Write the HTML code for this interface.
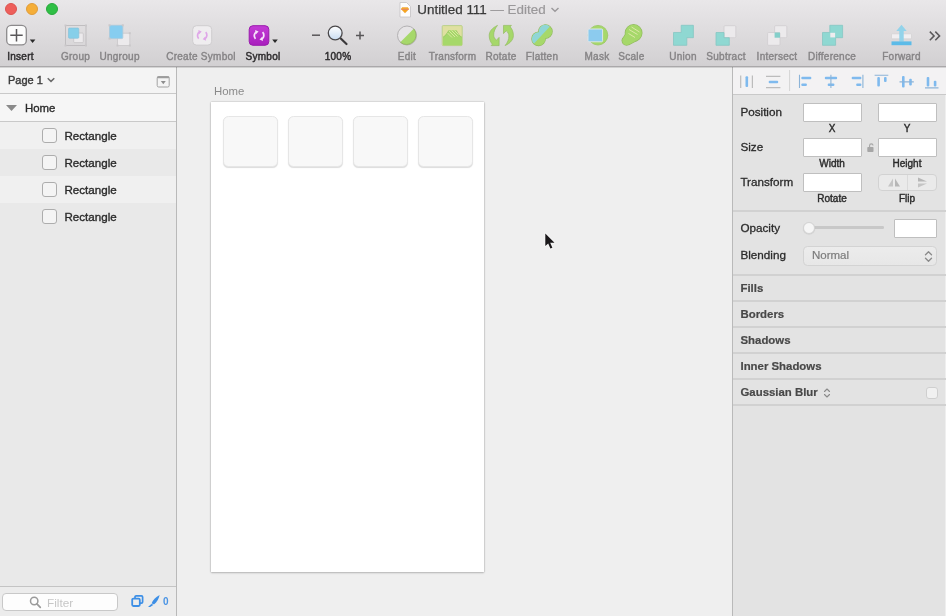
<!DOCTYPE html>
<html><head><meta charset="utf-8">
<style>
*{box-sizing:border-box;margin:0;padding:0}
html,body{width:946px;height:616px;overflow:hidden;background:#efefef;font-family:"Liberation Sans",sans-serif;}
.abs{position:absolute}
#win{will-change:transform;position:absolute;left:0;top:0;width:946px;height:616px;overflow:hidden;filter:blur(0.4px)}
#tb{position:absolute;left:0;top:0;width:946px;height:67px;background:linear-gradient(#e9e7e9,#d2d0d2);border-bottom:1px solid #aaa8aa;box-shadow:0 1px 0 rgba(0,0,0,.13);z-index:5}
.tl{position:absolute;top:3.4px;width:12px;height:12px;border-radius:50%}
.lbl{position:absolute;top:50.5px;font-size:10px;letter-spacing:0.27px;color:#868486;-webkit-text-stroke:0.4px #868486;white-space:nowrap;transform:translateX(-50%)}
.lbl.d{color:#2e2c2e;-webkit-text-stroke:0.45px #2e2c2e}
#title{position:absolute;top:2px;left:417.3px;font-size:13.4px;color:#3a3a3a;white-space:nowrap;-webkit-text-stroke:0.25px #3a3a3a}
#title span{color:#9a989a;-webkit-text-stroke:0.2px #9a989a}
/* left */
#left{position:absolute;left:0;top:67px;width:177px;height:549px;background:#e9e9e9;border-right:1px solid #b9b9b9}
#pagehdr{position:absolute;left:0;top:0;width:176px;height:27px;background:#f4f4f4;border-bottom:1px solid #c9c9c9}
#homerow{position:absolute;left:0;top:27px;width:176px;height:28px;background:#f6f6f6;border-bottom:1px solid #c9c9c9}
.row{position:absolute;left:0;width:176px;height:27px}
.row .cb{position:absolute;left:42px;top:6px;width:15px;height:14.5px;border:1.4px solid #adadad;border-radius:3px;background:#f4f4f4}
.row .t{position:absolute;left:64.5px;top:6.6px;font-size:11.6px;color:#2b2b2b;-webkit-text-stroke:0.35px #2b2b2b}
#lfoot{position:absolute;left:0;top:519px;width:176px;height:30px;background:#ececec;border-top:1px solid #c4c4c4}
/* canvas */
#canvas{position:absolute;left:177px;top:67px;width:556px;height:549px;background:#efefef}
#art{position:absolute;left:33.5px;top:34.5px;width:273.5px;height:470px;background:#fff;box-shadow:0 0 1.5px rgba(0,0,0,.3),0 1px 2px rgba(0,0,0,.18)}
.card{position:absolute;top:14.2px;width:54.4px;height:51px;border-radius:5.5px;background:#f8f8f8;border:1px solid #e6e6e6;box-shadow:0 1px 1px rgba(0,0,0,.14)}
/* right */
#right{position:absolute;left:732px;top:67px;width:213px;height:549px;background:#e3e3e3;border-left:1px solid #b9b9b9}
.sep{position:absolute;left:0;width:213px;height:1.6px;background:#d1d1d1}
.rl{position:absolute;left:7.4px;font-size:11.7px;color:#2b2b2b;-webkit-text-stroke:0.3px #2b2b2b}
.rb{position:absolute;left:7.5px;font-size:11.4px;font-weight:bold;color:#484848;-webkit-text-stroke:0.2px #484848}
.inp{position:absolute;height:19px;background:#fff;border:1px solid #bfbfbf;border-radius:1px}
.sl{position:absolute;font-size:10px;color:#2b2b2b;transform:translateX(-50%);white-space:nowrap;-webkit-text-stroke:0.4px #2b2b2b}
</style></head><body>
<div id="win">
<div id="tb">
  <div class="tl" style="left:5.4px;background:#ee5f5b;border:0.5px solid #dc5450"></div>
  <div class="tl" style="left:25.7px;background:#f5ae38;border:0.5px solid #e09c3a"></div>
  <div class="tl" style="left:45.8px;background:#2fbf45;border:0.5px solid #2aa83c"></div>
  <div id="title">Untitled 111 <span>— Edited</span></div>
  <div class="lbl d" style="left:20.5px">Insert</div>
  <div class="lbl" style="left:75.5px">Group</div>
  <div class="lbl" style="left:119.6px">Ungroup</div>
  <div class="lbl" style="left:201px">Create Symbol</div>
  <div class="lbl d" style="left:263px">Symbol</div>
  <div class="lbl d" style="left:338px">100%</div>
  <div class="lbl" style="left:407px">Edit</div>
  <div class="lbl" style="left:452.5px">Transform</div>
  <div class="lbl" style="left:501px">Rotate</div>
  <div class="lbl" style="left:542px">Flatten</div>
  <div class="lbl" style="left:597px">Mask</div>
  <div class="lbl" style="left:631.5px">Scale</div>
  <div class="lbl" style="left:683px">Union</div>
  <div class="lbl" style="left:726px">Subtract</div>
  <div class="lbl" style="left:777px">Intersect</div>
  <div class="lbl" style="left:832px">Difference</div>
  <div class="lbl" style="left:901.5px">Forward</div>

<svg class="abs" style="left:0;top:0" width="946" height="67" viewBox="0 0 946 67">
  <defs>
    <linearGradient id="lens" x1="0" y1="0" x2="0" y2="1"><stop offset="0" stop-color="#ffffff"/><stop offset="1" stop-color="#c9dcf2"/></linearGradient>
    <linearGradient id="pur" x1="0" y1="0" x2="0" y2="1"><stop offset="0" stop-color="#c43bd6"/><stop offset="1" stop-color="#a81fbd"/></linearGradient>
  </defs>
  <!-- doc icon -->
  <g>
    <path d="M400 2.5h6.5l4 4v10.5h-10.5z" fill="#fdfdfd" stroke="#c4c2c4" stroke-width="0.8"/>
    <path d="M402.2 7.2h5.6l1.4 1.9l-4.2 4.1l-4.2-4.1z" fill="#f2a634"/>
    <path d="M400.9 9.1h8.2l-1 1h-6.2z" fill="#e58a62"/><path d="M403 10.1h4l-2 2.2z" fill="#f7a51c"/>
  </g>
  <path d="M551.5 8l3.5 3.3l3.5-3.3" fill="none" stroke="#9a989a" stroke-width="1.4"/>
  <!-- Insert -->
  <rect x="6.7" y="25.3" width="19.6" height="19.6" rx="4.5" fill="#fbfbfb" stroke="#8c8a8c" stroke-width="1.3"/>
  <path d="M10.3 35.2h12.4M16.5 29v12.4" stroke="#585658" stroke-width="1.5" fill="none"/>
  <path d="M29.8 39.6h5.6l-2.8 3.4z" fill="#2a2a2a"/>
  <!-- Group -->
  <rect x="65.5" y="25.5" width="20.5" height="20" fill="none" stroke="#bdbbbd" stroke-width="0.9"/>
  <g fill="#c9c7c9"><rect x="64.5" y="24.5" width="2" height="2"/><rect x="85" y="24.5" width="2" height="2"/><rect x="64.5" y="44.5" width="2" height="2"/><rect x="85" y="44.5" width="2" height="2"/></g>
  <rect x="73.7" y="33" width="9.6" height="9.6" rx="1" fill="#eceaec" stroke="#c6c4c6" stroke-width="0.8"/>
  <rect x="68.5" y="28" width="10.3" height="10.3" rx="1" fill="#86cfe9" stroke="#7fc0d9" stroke-width="0.6"/>
  <!-- Ungroup -->
  <rect x="117.5" y="33.2" width="12.3" height="12.3" rx="1" fill="#eceaec" stroke="#c9c7c9" stroke-width="0.8"/>
  <rect x="109.5" y="25.3" width="13.3" height="13.3" rx="1" fill="#86cdf0" stroke="#a9c9dc" stroke-width="0.8"/>
  <g fill="#c9c7c9"><rect x="108.5" y="24.3" width="2" height="2"/><rect x="121.8" y="24.3" width="2" height="2"/><rect x="108.5" y="37.6" width="2" height="2"/><rect x="128.8" y="32.2" width="2" height="2"/><rect x="128.8" y="44.5" width="2" height="2"/><rect x="116.5" y="44.5" width="2" height="2"/></g>
  <!-- Create Symbol -->
  <rect x="192.7" y="25.7" width="19" height="19.4" rx="3.8" fill="#efedef" stroke="#cfcdcf" stroke-width="1"/>
  <g fill="none" stroke="#dfa6e8" stroke-width="1.7">
    <path d="M198.7 38.6a4.3 4.3 0 0 1 0.8-6.6"/><path d="M205.7 32.2a4.3 4.3 0 0 1-0.8 6.6"/>
  </g>
  <path d="M198.3 30l3.4 1.5l-2.6 2.7z M206.1 40.8l-3.4-1.5l2.6-2.7z" fill="#dfa6e8"/>
  <!-- Symbol -->
  <rect x="249.2" y="25.7" width="19.6" height="19.6" rx="3.8" fill="url(#pur)" stroke="#9a1cad" stroke-width="1"/>
  <g fill="none" stroke="#f6e2fa" stroke-width="1.8">
    <path d="M255.5 38.8a4.4 4.4 0 0 1 0.8-6.8"/><path d="M262.6 32.2a4.4 4.4 0 0 1-0.8 6.8"/>
  </g>
  <path d="M255.1 29.9l3.5 1.6l-2.7 2.8z M263 41.1l-3.5-1.6l2.7-2.8z" fill="#f6e2fa"/>
  <path d="M272.2 39.6h5.6l-2.8 3.4z" fill="#2a2a2a"/>
  <!-- zoom -->
  <path d="M312 35.2h8" stroke="#585658" stroke-width="1.5"/>
  <path d="M356 35.4h8M360 31.4v8" stroke="#585658" stroke-width="1.5"/>
  <path d="M340.5 38.3l6 5.7" stroke="#3a383a" stroke-width="2.2" stroke-linecap="round"/>
  <circle cx="335.2" cy="33" r="6.9" fill="url(#lens)" stroke="#4a484a" stroke-width="1.3"/>
  <!-- Edit -->
  <circle cx="407" cy="35.5" r="9.5" fill="#e6e4e6"/>
  <path d="M400.3 42.2A9.5 9.5 0 0 0 413.7 28.8z" fill="#a6d86a"/>
  <circle cx="407" cy="35.5" r="9.5" fill="none" stroke="#b3b1b3" stroke-width="1"/>
  <path d="M400.3 42.2A9.5 9.5 0 0 0 413.7 28.8" fill="none" stroke="#96b862" stroke-width="1"/>
  <!-- Transform -->
  <rect x="442.2" y="25.6" width="20" height="20" rx="1" fill="#dfe0a0" stroke="#b7cf86" stroke-width="0.9"/>
  <path d="M443 45.2v-8.5c2-1 3.5-3.5 5.5-6.5h8c1.5 3 3 5.5 5.5 6.5v8.5z" fill="#a6d86a"/>
  <path d="M443.3 37.2c2-1 3.7-3.5 5.5-6.5M461.5 37.2c-2-1-3.7-3.5-5-6.5" stroke="#9cc46a" stroke-width="0.7" fill="none"/>
  <path d="M449 31l6 6M451.5 30.5l6 6M447.5 33l4.5 4.5M454.5 30.5l4 4" stroke="#dfe8a6" stroke-width="0.9"/>
  <!-- Rotate -->
  <path id="rarr" d="M497.5 25.4C492 28 489.2 31.5 489.2 35.5C489.2 39 490.4 42 492.4 44.2L491.2 45.6L499.1 45.6L499.1 37.4L496.4 40.2C494.6 38.8 493.7 37 493.7 35C493.7 31.5 495 28.5 497.5 25.4Z" fill="#a6d86a" stroke="#93bb62" stroke-width="0.7" stroke-linejoin="round"/>
  <use href="#rarr" transform="rotate(180 501.3 35.5)"/>
  <!-- Flatten -->
  <g transform="rotate(-47 542 35.2)">
    <clipPath id="pn"><circle cx="537" cy="35.2" r="6.7"/><circle cx="547" cy="35.2" r="6.7"/></clipPath>
    <g stroke="#93bb62" stroke-width="1.3" fill="#a6d86a"><circle cx="537" cy="35.2" r="6.7"/><circle cx="547" cy="35.2" r="6.7"/></g>
    <g clip-path="url(#pn)">
      <rect x="524" y="26" width="36" height="18" fill="#a6d86a"/>
      <rect x="524" y="26" width="36" height="9" fill="#8fd6d6"/>
    </g>
  </g>
  <!-- Mask -->
  <circle cx="598" cy="35.2" r="9.8" fill="#a6d86a" stroke="#9ac765" stroke-width="0.8"/>
  <rect x="588" y="29" width="14.6" height="12.8" rx="1" fill="#8ccbee" stroke="#dce6ea" stroke-width="1"/>
  <!-- Scale -->
  <g stroke="#93bb62" stroke-width="1.4" fill="#a6d86a"><circle cx="633.6" cy="33" r="8.2"/><circle cx="626.6" cy="40.8" r="4.3"/><path d="M625.4 34.5L622.4 40L629 44.5L636 40.8z"/></g>
  <g fill="#a6d86a"><circle cx="633.6" cy="33" r="8.2"/><circle cx="626.6" cy="40.8" r="4.3"/><path d="M625.4 34.5L622.4 40L629 44.5L636 40.8z"/></g>
  <path d="M629 29.5l8.5 5M631.5 27l8 5M628.5 33.5l6.5 4" stroke="#dde9a8" stroke-width="1"/>
  <!-- Union -->
  <path d="M681.2 25.3h12.2v12.4h-6.6v7.6h-13.3v-12.8h7.7z" fill="#8fd8d2" stroke="#86c7c3" stroke-width="0.8" stroke-linejoin="round"/>
  <!-- Subtract -->
  <rect x="724" y="25.7" width="11.8" height="12" rx="1" fill="#eceaec" stroke="#cfcdcf" stroke-width="0.8"/>
  <path d="M716 32.5h8v5.2h5.3v7.6h-13.3z" fill="#8fd8d2" stroke="#86c7c3" stroke-width="0.8" stroke-linejoin="round"/>
  <!-- Intersect -->
  <rect x="774.6" y="25.7" width="12.2" height="12" rx="1" fill="#eceaec" stroke="#cfcdcf" stroke-width="0.8"/>
  <rect x="767.6" y="32.5" width="12.4" height="12.8" rx="1" fill="#eceaec" stroke="#cfcdcf" stroke-width="0.8"/>
  <rect x="774.6" y="32.5" width="5.4" height="5.2" fill="#84cfca"/>
  <!-- Difference -->
  <path d="M829.8 25.3h12.8v12.4h-7v7.6h-13.1v-12.8h7.3z" fill="#8fd8d2" stroke="#86c7c3" stroke-width="0.8" stroke-linejoin="round"/>
  <rect x="830.3" y="32.8" width="4.8" height="4.6" fill="#efedef"/>
  <!-- Forward -->
  <rect x="891.5" y="33.8" width="20" height="5" rx="0.8" fill="#f1eff1" stroke="#cfcdcf" stroke-width="0.6"/>
  <path d="M901.5 24.8l5.2 6.2h-3v10.5h-4.4v-10.5h-3z" fill="#93d3ea"/>
  <rect x="891.5" y="41.4" width="20" height="3.8" fill="#5cbbe8"/>
  <!-- chevrons -->
  <path d="M929.8 31.6l4.3 4.3l-4.3 4.3M935.3 31.6l4.3 4.3l-4.3 4.3" fill="none" stroke="#5a585a" stroke-width="1.5"/>
</svg>
</div>

<div id="left">
  <div id="pagehdr"><div class="abs" style="left:8px;top:7.3px;font-size:11px;color:#3a3a3a;-webkit-text-stroke:0.4px #3a3a3a">Page 1</div>
    <svg class="abs" style="left:46px;top:9px" width="10" height="8" viewBox="0 0 10 8"><path d="M1.7 2.3L5 5.4L8.3 2.3" fill="none" stroke="#6a6a6a" stroke-width="1.5"/></svg>
    <svg class="abs" style="left:156px;top:8px" width="15" height="14" viewBox="0 0 15 14"><rect x="1.2" y="1.6" width="12" height="10.4" rx="1.5" fill="#f4f4f4" stroke="#a2a2a2" stroke-width="1"/><rect x="1.2" y="1.2" width="12" height="2" rx="0.8" fill="#9c9c9c"/><path d="M4.8 6h5l-2.5 3.2z" fill="#8e8e8e"/></svg>
  </div>
  <div id="homerow"><div class="abs" style="left:25px;top:7.5px;font-size:11.4px;color:#2b2b2b;-webkit-text-stroke:0.350px #2b2b2b">Home</div>
    <svg class="abs" style="left:5px;top:10px" width="13" height="8" viewBox="0 0 13 8"><path d="M1 1h11l-5.5 6z" fill="#8a8a8a"/></svg>
  </div>
  <div class="row" style="top:55px;background:#f0f0f0"><div class="cb"></div><div class="t">Rectangle</div></div>
  <div class="row" style="top:82px;background:#e9e9e9"><div class="cb"></div><div class="t">Rectangle</div></div>
  <div class="row" style="top:109px;background:#f0f0f0"><div class="cb"></div><div class="t">Rectangle</div></div>
  <div class="row" style="top:136px;background:#e9e9e9"><div class="cb"></div><div class="t">Rectangle</div></div>
  <div id="lfoot">
    <div class="abs" style="left:1.8px;top:5.5px;width:116.7px;height:18.5px;background:#fdfdfd;border:1px solid #c8c8c8;border-radius:4px"></div>
    <svg class="abs" style="left:28px;top:8px" width="15" height="15" viewBox="0 0 15 15"><circle cx="6.2" cy="6" r="3.7" fill="none" stroke="#9b9b9b" stroke-width="1.5"/><path d="M8.9 8.8L12.3 12.3" stroke="#9b9b9b" stroke-width="1.7" stroke-linecap="round"/></svg>
    <div class="abs" style="left:47px;top:8.5px;font-size:11.8px;color:#c6c6c6">Filter</div>
    <svg class="abs" style="left:130px;top:7px" width="15" height="14" viewBox="0 0 15 14">
      <rect x="5" y="1.8" width="7.6" height="7.4" rx="1.2" fill="none" stroke="#3d8fe6" stroke-width="1.7"/>
      <rect x="2.2" y="4.6" width="7.6" height="7.4" rx="1.2" fill="#ececec" stroke="#3d8fe6" stroke-width="1.8"/>
    </svg>
    <svg class="abs" style="left:147px;top:7px" width="14" height="14" viewBox="0 0 14 14">
      <path d="M12.6 1C8.8 2.8 5.6 6.3 4.6 9.5l2.6 0.7C9.8 8.2 11.9 4.5 12.6 1z" fill="#3d8fe6"/>
      <path d="M4.3 10l2.3 0.7L3.2 13H1z" fill="#3d8fe6"/>
    </svg>
    <div class="abs" style="left:163px;top:9px;font-size:10px;font-weight:bold;color:#4a94e4">0</div>
  </div>
</div>

<div id="canvas">
  <div class="abs" style="left:37px;top:17.5px;font-size:11.4px;color:#8a8a8a">Home</div>
  <div id="art">
    <div class="card" style="left:12.8px"></div>
    <div class="card" style="left:77.8px"></div>
    <div class="card" style="left:142.8px"></div>
    <div class="card" style="left:207.8px"></div>
  </div>
</div>

<div id="right">

  <div class="sep" style="top:26.5px;background:#c9c9c9"></div>
  <!-- align icons -->
  <div class="abs" style="left:0;top:0;width:213px;height:27px;background:#f3f2f3"></div>
  <svg class="abs" style="left:0;top:0" width="213" height="27" viewBox="0 0 213 27">
    <g stroke="#bcbcbc" stroke-width="1.2" fill="none"><path d="M7.7 8.5V21M19.4 8.5V21"/><path d="M33 9.3H47.4M33 20.7H47.4"/><path d="M56.6 3V24" stroke="#d4d4d4" stroke-width="1"/></g>
    <g fill="#7fbaee"><rect x="12.5" y="9.3" width="2.6" height="10.7" rx="1"/><rect x="35.7" y="13.7" width="9.5" height="2.6" rx="1"/><rect x="68.3" y="9.7" width="10.0" height="2.6" rx="1"/><rect x="68.3" y="16.5" width="5.6" height="2.6" rx="1"/><rect x="91.8" y="9.7" width="12.3" height="2.6" rx="1"/><rect x="94.7" y="16.5" width="6.7" height="2.6" rx="1"/><rect x="118.7" y="9.7" width="9.7" height="2.6" rx="1"/><rect x="123.2" y="16.5" width="5.2" height="2.6" rx="1"/><rect x="144.3" y="10" width="2.6" height="9.4" rx="1"/><rect x="151.0" y="10" width="2.6" height="5" rx="1"/><rect x="169.0" y="9" width="2.6" height="11.6" rx="1"/><rect x="176.2" y="11.8" width="2.6" height="6.7" rx="1"/><rect x="193.7" y="10" width="2.6" height="9.6" rx="1"/><rect x="200.8" y="13.8" width="2.6" height="5.8" rx="1"/></g>
    <g stroke="#8db4d8" stroke-width="1.1" fill="none"><path d="M66.5 7.7V21M97.9 7.7V21M129.9 7.7V21"/><path d="M141.6 8.2H155.3M166.5 14.9H180.8M192 20.9H205.5"/></g>
  </svg>
  <div class="rl" style="top:38.4px">Position</div>
  <div class="inp" style="left:70px;top:36px;width:59px"></div>
  <div class="inp" style="left:145px;top:36px;width:59px"></div>
  <div class="sl" style="left:99px;top:56px">X</div>
  <div class="sl" style="left:174px;top:56px">Y</div>
  <div class="rl" style="top:73.4px">Size</div>
  <div class="inp" style="left:70px;top:71px;width:59px"></div>
  <div class="inp" style="left:145px;top:71px;width:59px"></div>
  <svg class="abs" style="left:134.3px;top:75.5px" width="7" height="10" viewBox="0 0 7 10"><rect x="0.3" y="4" width="6.2" height="5" rx="0.8" fill="#a6a6a6"/><path d="M2.6 4V2.6a1.7 1.7 0 0 1 3.4 0" fill="none" stroke="#a6a6a6" stroke-width="1.1"/></svg>
  <div class="sl" style="left:99px;top:91px">Width</div>
  <div class="sl" style="left:174px;top:91px">Height</div>
  <div class="rl" style="top:108.4px">Transform</div>
  <div class="inp" style="left:70px;top:106px;width:59px"></div>
  <div class="abs" style="left:145px;top:107px;width:59px;height:17px;border:1px solid #d2d2d2;border-radius:4px;background:#eaeaea"></div>
  <div class="abs" style="left:174px;top:108px;width:1px;height:15px;background:#dadada"></div>
  <svg class="abs" style="left:145px;top:107px" width="59" height="17" viewBox="0 0 59 17">
    <path d="M15 4.5v8h-5z" fill="#c4c4c4"/><path d="M17 4.5v8h5z" fill="#b6b6b6"/>
    <path d="M40 7.5h9l-9-4z" fill="#b6b6b6"/><path d="M40 9.5h9l-9 4z" fill="#c4c4c4"/>
  </svg>
  <div class="sl" style="left:99px;top:126px">Rotate</div>
  <div class="sl" style="left:174px;top:126px">Flip</div>
  <div class="sep" style="top:143px"></div>
  <div class="rl" style="top:154.4px">Opacity</div>
  <div class="abs" style="left:77px;top:159.3px;width:74px;height:2.6px;background:#c8c8c8;border-radius:1.3px"></div>
  <div class="abs" style="left:70.3px;top:154.5px;width:12px;height:12px;border-radius:50%;background:#f6f6f6;border:1px solid #d4d4d4;box-shadow:0 0.5px 1px rgba(0,0,0,.12)"></div>
  <div class="inp" style="left:161px;top:151.5px;width:43px"></div>
  <div class="rl" style="top:181.2px">Blending</div>
  <div class="abs" style="left:70px;top:179.3px;width:134px;height:20px;border:1px solid #d3d3d3;border-radius:4.5px;background:linear-gradient(#ececec,#e7e7e7)"></div>
  <div class="abs" style="left:79px;top:182.3px;font-size:11.5px;color:#7c7c7c;-webkit-text-stroke:0.2px #7c7c7c">Normal</div>
  <svg class="abs" style="left:191px;top:182.5px" width="9" height="13" viewBox="0 0 9 13"><path d="M1.5 4.8L4.5 1.8L7.5 4.8M1.5 8.2L4.5 11.2L7.5 8.2" fill="none" stroke="#8a8a8a" stroke-width="1.3" stroke-linecap="round" stroke-linejoin="round"/></svg>
  <div class="sep" style="top:207px"></div>
  <div class="rb" style="top:215px">Fills</div>
  <div class="sep" style="top:233px"></div>
  <div class="rb" style="top:241px">Borders</div>
  <div class="sep" style="top:259px"></div>
  <div class="rb" style="top:267px">Shadows</div>
  <div class="sep" style="top:285px"></div>
  <div class="rb" style="top:293px">Inner Shadows</div>
  <div class="sep" style="top:311px"></div>
  <div class="rb" style="top:319px">Gaussian Blur</div>
  <svg class="abs" style="left:89.5px;top:320px" width="8" height="12" viewBox="0 0 8 12"><path d="M1.5 4.5L4 2L6.5 4.5M1.5 7.5L4 10L6.5 7.5" fill="none" stroke="#8a8a8a" stroke-width="1.1" stroke-linecap="round" stroke-linejoin="round"/></svg>
  <div class="abs" style="left:193px;top:320px;width:12px;height:12px;border:1px solid #cfcfcf;border-radius:3px;background:#f1f1f1"></div>
  <div class="sep" style="top:337px"></div>
</div>
<svg class="abs" style="left:540px;top:229px;z-index:50" width="20" height="24" viewBox="0 0 20 24"><path d="M5.3 4.4v12.6l2.9-2.6l2.2 5.2l2-0.9l-2.2-5h4.3z" fill="#1a181a" stroke="#f6f6f6" stroke-width="1.8" stroke-linejoin="round" paint-order="stroke"/></svg>
</div>
</body></html>
